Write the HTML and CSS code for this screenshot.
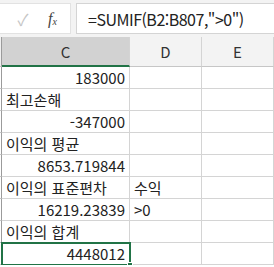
FILE: index.html
```html
<!DOCTYPE html>
<html lang="ko">
<head>
    <meta charset="UTF-8">
    <title>SUMIF</title>
    <link rel="stylesheet" href="styles.css">
</head>
<body>
    <div class="formula-bar">
        <div class="buttons">
            <span class="check">&#10003;</span>
            <span class="fx">f<sub>x</sub></span>
        </div>
        <div class="formula">=SUMIF(B2:B807,"&gt;0")</div>
    </div>

    <div class="sheet">
        <div class="rh head"></div>
        <div class="ch selected">C</div>
        <div class="ch">D</div>
        <div class="ch">E</div>

        <div class="rh"></div><div class="cell num">183000</div><div class="cell"></div><div class="cell"></div>
        <div class="rh"></div><div class="cell">최고손해</div><div class="cell"></div><div class="cell"></div>
        <div class="rh"></div><div class="cell num">-347000</div><div class="cell"></div><div class="cell"></div>
        <div class="rh"></div><div class="cell">이익의 평균</div><div class="cell"></div><div class="cell"></div>
        <div class="rh"></div><div class="cell num">8653.719844</div><div class="cell"></div><div class="cell"></div>
        <div class="rh"></div><div class="cell">이익의 표준편차</div><div class="cell">수익</div><div class="cell"></div>
        <div class="rh"></div><div class="cell num">16219.23839</div><div class="cell">&gt;0</div><div class="cell"></div>
        <div class="rh"></div><div class="cell">이익의 합계</div><div class="cell"></div><div class="cell"></div>
        <div class="rh"></div><div class="cell num active">4448012<span class="handle"></span></div><div class="cell"></div><div class="cell"></div>
    </div>
</body>
</html>
```

FILE: styles.css
```css
*{
    box-sizing: border-box;
}
body{
    margin: 0;
    padding: 0;
    background: #fff;
    font-family: "Noto Sans CJK KR", "Noto Sans", sans-serif;
    color: #222;
    overflow: hidden;
}
.formula-bar{
    display: flex;
    height: 37px;
    padding: 3px 0;
    background: #f3f3f3;
}
.buttons{
    width: 71px;
    display: flex;
    align-items: center;
    background: #fff;
    border: 1px solid #e2e2e2;
    border-left: none;
}
.check{
    width: 40px;
    text-align: center;
    color: #c6c6c6;
    font-size: 16px;
    padding-left: 6px;
}
.fx{
    margin-left: 8px;
    font-family: "Liberation Serif", serif;
    font-style: italic;
    font-size: 16px;
    color: #444;
}
.fx sub{
    font-size: 10px;
    vertical-align: -1px;
}
.formula{
    flex: 1;
    margin-left: 5px;
    background: #fff;
    border: 1px solid #d4d4d4;
    border-right: none;
    padding-left: 11px;
    display: flex;
    align-items: center;
    font-size: 16px;
    letter-spacing: -0.5px;
    color: #222;
}
.sheet{
    display: grid;
    grid-template-columns: 2px 128px 72px 72px;
    grid-template-rows: 30px repeat(9, 22px);
}
.rh{
    border-bottom: 1px solid #c6c6c6;
    border-right: 1px solid #9b9b9b;
    background: #fff;
}
.rh.head{
    background: #f0f0f0;
}
.ch{
    background: #f3f3f3;
    border-right: 1px solid #d4d4d4;
    border-bottom: 1px solid #c6c6c6;
    display: flex;
    align-items: center;
    justify-content: center;
    font-size: 15px;
    color: #333;
}
.ch.selected{
    background: #d2d2d2;
    border-bottom: 2px solid #217346;
}
.cell{
    position: relative;
    border-right: 1px solid #d4d4d4;
    border-bottom: 1px solid #d4d4d4;
    font-size: 15px;
    line-height: 22px;
    padding: 0 4px;
    white-space: nowrap;
}
.num{
    text-align: right;
}
.active{
    outline: 2px solid #217346;
    outline-offset: -1px;
    z-index: 2;
}
.handle{
    position: absolute;
    right: -4px;
    bottom: -4px;
    width: 6px;
    height: 6px;
    background: #217346;
    border: 1px solid #fff;
}
```
